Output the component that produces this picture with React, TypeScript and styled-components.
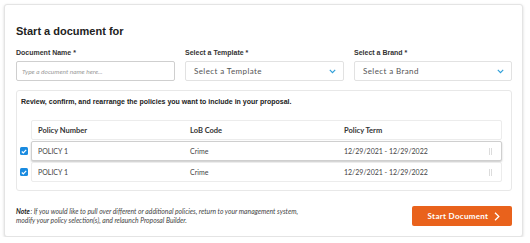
import React from "react";
import styled, { createGlobalStyle } from "styled-components";

const GlobalStyle = createGlobalStyle`
  html, body { margin: 0; padding: 0; background: #ffffff; }
  * { box-sizing: border-box; }
`;

const Card = styled.div`
  margin: 4px 0 0 4px;
  width: 519px;
  height: 233px;
  background: #fff;
  border: 1px solid #e4e4e4;
  border-radius: 3px;
  box-shadow: 0 1px 3px rgba(0, 0, 0, 0.16);
  padding: 19px 10px 0 11px;
  display: flex;
  flex-direction: column;
`;

const Title = styled.h1`
  margin: 0;
  font-family: "Liberation Sans", Arial, sans-serif;
  font-size: 11px;
  line-height: 14px;
  font-weight: 700;
  color: #222;
`;

const FieldRow = styled.div`
  display: flex;
  gap: 10px;
  margin-top: 10px;
`;

const Field = styled.div<{ $w: number }>`
  display: flex;
  flex-direction: column;
  gap: 4px;
  width: ${(p) => p.$w}px;
  flex: none;
`;

const Label = styled.label`
  font-family: "Liberation Sans", Arial, sans-serif;
  font-size: 7px;
  line-height: 9px;
  font-weight: 700;
  color: #333;
`;

const TextInput = styled.input`
  height: 20px;
  width: 100%;
  min-width: 0;
  border: 1px solid #cfcfcf;
  border-radius: 2px;
  padding: 0 5px;
  font-family: Lato, sans-serif;
  font-size: 6.5px;
  outline: none;
  &::placeholder {
    color: #9a9a9a;
    font-style: italic;
  }
`;

const SelectBox = styled.div`
  height: 20px;
  width: 100%;
  border: 1px solid #e2e2e2;
  border-radius: 2px;
  padding: 0 7px 0 8px;
  display: flex;
  align-items: center;
  justify-content: space-between;
  font-family: Lato, sans-serif;
  font-size: 8px;
  letter-spacing: 0.4px;
  color: #555;
  background: #fff;
`;

const Chevron = () => (
  <svg width="7" height="5" viewBox="0 0 7 5">
    <path d="M0.8 0.9 L3.5 3.6 L6.2 0.9" fill="none" stroke="#2f9fd9" strokeWidth="1.2" />
  </svg>
);

const Panel = styled.div`
  margin-top: 9px;
  height: 101px;
  border: 1px solid #e8e8e8;
  border-radius: 3px;
  padding: 6px 9px 0 0;
  display: flex;
  flex-direction: column;
`;

const Intro = styled.p`
  margin: 0 0 0 4px;
  font-family: "Liberation Sans", Arial, sans-serif;
  font-size: 7px;
  line-height: 9px;
  font-weight: 700;
  color: #222;
`;

const Table = styled.div`
  margin-top: 14px;
  display: flex;
  flex-direction: column;
  gap: 1px;
`;

const Line = styled.div`
  display: flex;
  align-items: center;
`;

const Gutter = styled.div`
  width: 14px;
  flex: none;
  display: flex;
  align-items: center;
  padding-left: 3px;
`;

const Check = styled.span`
  width: 8px;
  height: 8px;
  border-radius: 1.5px;
  background: #1a8be0;
  display: flex;
  align-items: center;
  justify-content: center;
`;

const RowBox = styled.div<{ $lifted?: boolean; $head?: boolean }>`
  flex: 1;
  height: 20px;
  display: grid;
  grid-template-columns: 152px 154px 1fr 12px;
  align-items: center;
  padding-left: 6px;
  border: 1px solid ${(p) => (p.$lifted ? "#cfcfcf" : "#ececec")};
  border-radius: 2px;
  box-shadow: ${(p) => (p.$lifted ? "0 1px 2px rgba(0,0,0,0.22)" : "none")};
  background: #fff;
  font-family: Lato, sans-serif;
  font-size: ${(p) => (p.$head ? "7.5px" : "7px")};
  font-weight: ${(p) => (p.$head ? 700 : 400)};
  color: ${(p) => (p.$head ? "#333" : "#444")};
`;

const Handle = styled.span`
  width: 3px;
  height: 7px;
  border-left: 1px solid #dcdcdc;
  border-right: 1px solid #dcdcdc;
`;

const Footer = styled.div`
  margin-top: 15px;
  display: flex;
  align-items: center;
  justify-content: space-between;
`;

const Note = styled.p`
  margin: 0;
  width: 285px;
  font-family: Lato, sans-serif;
  font-style: italic;
  font-size: 6.75px;
  line-height: 9px;
  color: #444;
  b {
    font-weight: 700;
    color: #222;
    margin-right: 0.5px;
  }
`;

const StartButton = styled.button`
  width: 100px;
  height: 20px;
  border: none;
  border-radius: 2px;
  background: #e9621c;
  color: #fff;
  font-family: Lato, sans-serif;
  font-weight: 700;
  font-size: 8px;
  letter-spacing: 0.3px;
  display: flex;
  align-items: center;
  justify-content: center;
  gap: 6px;
  padding: 0 0 0 4px;
`;

const policies = [
  { num: "POLICY 1", lob: "Crime", term: "12/29/2021 - 12/29/2022", lifted: true },
  { num: "POLICY 1", lob: "Crime", term: "12/29/2021 - 12/29/2022", lifted: false },
];

export default function App() {
  return (
    <>
      <GlobalStyle />
      <Card>
        <Title>Start a document for</Title>
        <FieldRow>
          <Field $w={159}>
            <Label>Document Name *</Label>
            <TextInput placeholder="Type a document name here..." />
          </Field>
          <Field $w={159}>
            <Label>Select a Template *</Label>
            <SelectBox>
              Select a Template
              <Chevron />
            </SelectBox>
          </Field>
          <Field $w={158}>
            <Label>Select a Brand *</Label>
            <SelectBox>
              Select a Brand
              <Chevron />
            </SelectBox>
          </Field>
        </FieldRow>
        <Panel>
          <Intro>Review, confirm, and rearrange the policies you want to include in your proposal.</Intro>
          <Table>
            <Line>
              <Gutter />
              <RowBox $head>
                <span>Policy Number</span>
                <span>LoB Code</span>
                <span>Policy Term</span>
                <span />
              </RowBox>
            </Line>
            {policies.map((p, i) => (
              <Line key={i}>
                <Gutter>
                  <Check>
                    <svg width="6" height="5" viewBox="0 0 6 5">
                      <path d="M0.8 2.5 L2.3 4 L5.2 0.9" fill="none" stroke="#fff" strokeWidth="1.2" />
                    </svg>
                  </Check>
                </Gutter>
                <RowBox $lifted={p.lifted}>
                  <span>{p.num}</span>
                  <span>{p.lob}</span>
                  <span>{p.term}</span>
                  <Handle />
                </RowBox>
              </Line>
            ))}
          </Table>
        </Panel>
        <Footer>
          <Note>
            <b>Note</b>: If you would like to pull over different or additional policies, return to your management system, modify your policy selection(s), and relaunch Proposal Builder.
          </Note>
          <StartButton>
            Start Document
            <svg width="6" height="9" viewBox="0 0 6 9">
              <path d="M1 0.8 L4.8 4.5 L1 8.2" fill="none" stroke="#fff" strokeWidth="1.3" />
            </svg>
          </StartButton>
        </Footer>
      </Card>
    </>
  );
}
